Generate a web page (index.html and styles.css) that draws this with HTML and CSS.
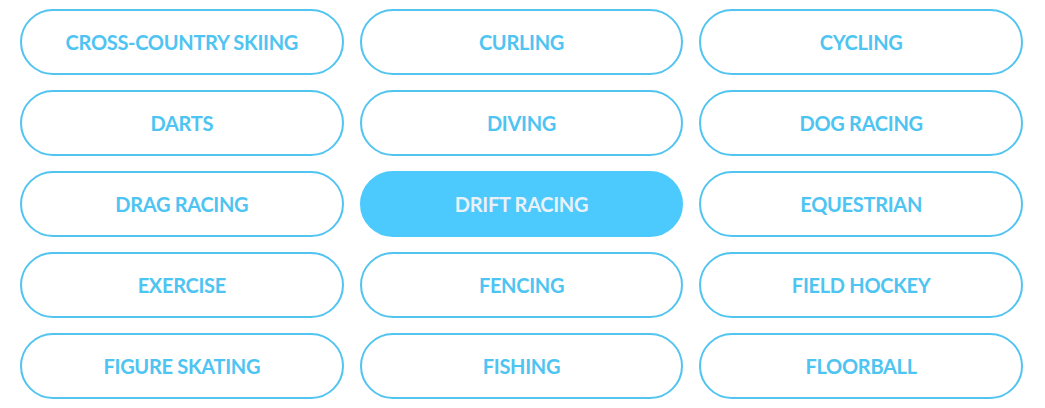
FILE: index.html
```html
<!DOCTYPE html>
<html lang="en">
<head>
  <meta charset="UTF-8" />
  <title>Sports</title>
  <link rel="stylesheet" href="styles.css">
</head>
<body>

  <!-- Sport picker -->
  <div class="sport-grid">
    <a class="sport-btn">Cross-Country Skiing</a>
    <a class="sport-btn">Curling</a>
    <a class="sport-btn">Cycling</a>
    <a class="sport-btn">Darts</a>
    <a class="sport-btn">Diving</a>
    <a class="sport-btn">Dog Racing</a>
    <a class="sport-btn">Drag Racing</a>
    <a class="sport-btn active">Drift Racing</a>
    <a class="sport-btn">Equestrian</a>
    <a class="sport-btn">Exercise</a>
    <a class="sport-btn">Fencing</a>
    <a class="sport-btn">Field Hockey</a>
    <a class="sport-btn">Figure Skating</a>
    <a class="sport-btn">Fishing</a>
    <a class="sport-btn">Floorball</a>
  </div>

</body>
</html>
```

FILE: styles.css
```css
body {
  font-family: Lato, "Open Sans", sans-serif;
  background: #fff;
  margin: 0;
  padding: 0;
}

.sport-grid {
  display: grid;
  grid-template-columns: repeat(3, 1fr);
  column-gap: 16px;
  row-gap: 15px;
  padding: 9px 22px 0 20px;
}

.sport-btn {
  display: flex;
  align-items: center;
  justify-content: center;
  height: 66px;
  box-sizing: border-box;
  border: 2px solid #52c4f0;
  border-radius: 33px;
  padding-bottom: 1px;
  color: #4ec4f2;
  font-size: 20px;
  font-weight: bold;
  text-transform: uppercase;
  letter-spacing: -0.3px;
  cursor: pointer;
}

.sport-btn.active {
  background: #4ccafd;
  border-color: #4ccafd;
  color: #eaf1f6;
}
```
